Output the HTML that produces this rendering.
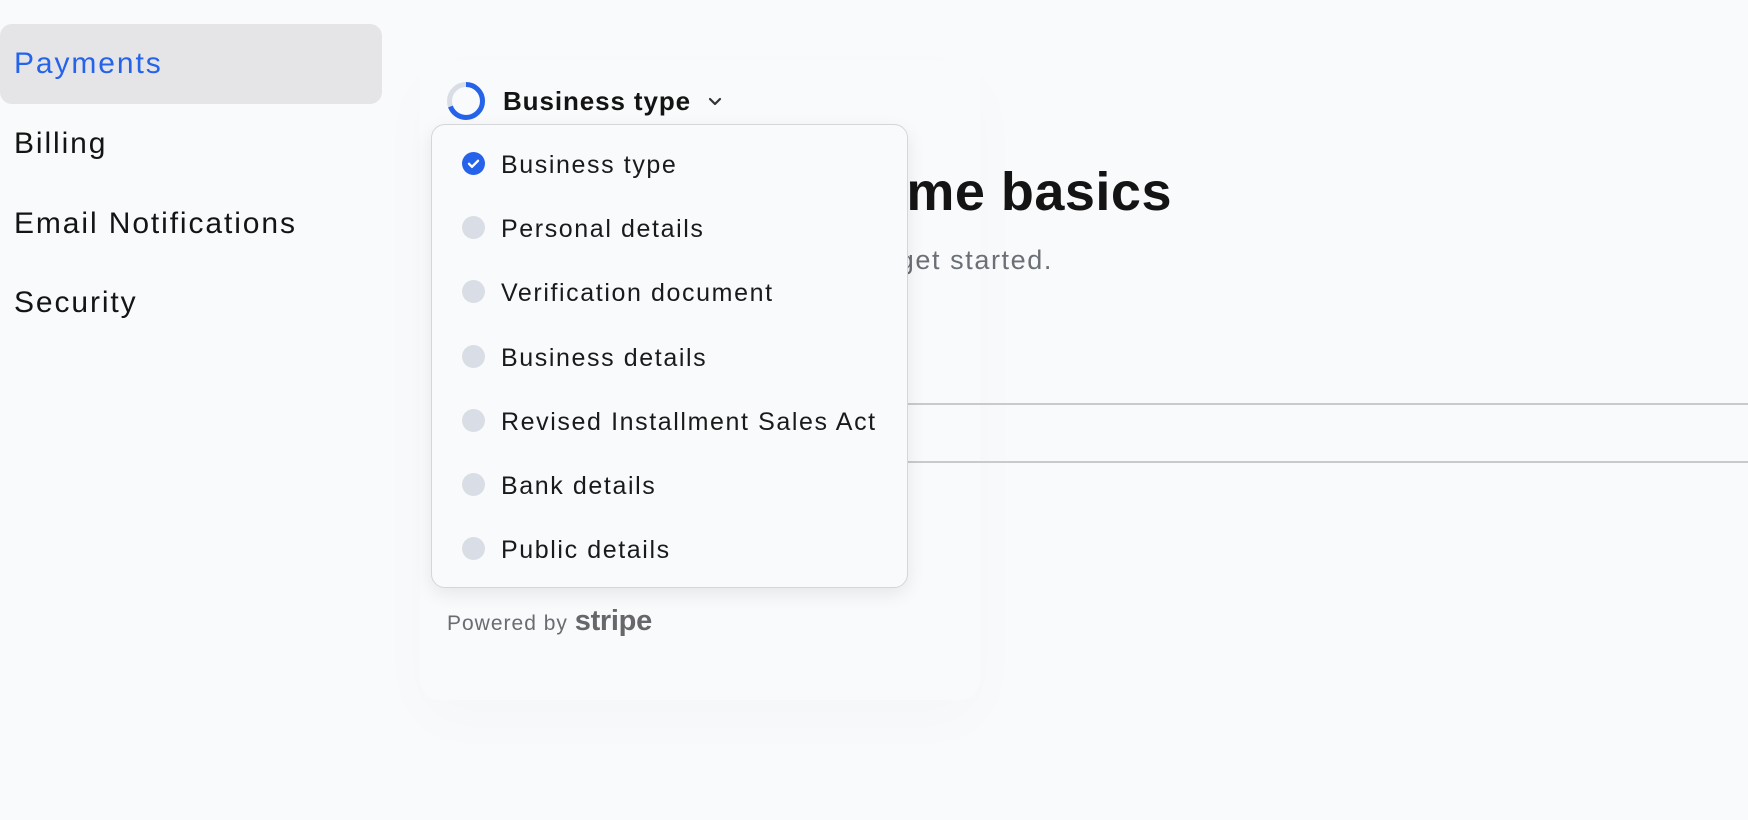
<!DOCTYPE html>
<html><head><meta charset="utf-8"><style>
*{margin:0;padding:0;box-sizing:border-box}
body{width:1748px;height:820px;background:#f9fafb;font-family:"Liberation Sans",sans-serif;position:relative;overflow:hidden;color:#111}
.abs{position:absolute;white-space:nowrap}
.nav{left:14px;font-size:30px;line-height:36px;color:#141414;letter-spacing:1.9px}
.hl{left:0;top:24px;width:382px;height:80px;background:#e5e5e8;border-radius:12px}
.dd{left:431px;top:124px;width:477px;height:464px;background:#f9fafb;border:1.5px solid #d4d6da;border-radius:14px;box-shadow:0 6px 18px rgba(0,0,0,.08)}
.it{left:501px;font-size:25px;line-height:30px;color:#1a1a1a;letter-spacing:1.6px}
.dot{left:462px;width:23px;height:23px;border-radius:50%;background:#d9dee6}
</style></head><body>
<div class="abs" style="left:420px;top:60px;width:560px;height:640px;box-shadow:0 20px 60px rgba(0,0,0,.02);border-radius:20px"></div>
<div class="abs hl"></div>
<div class="abs nav" style="top:46px;color:#2563eb">Payments</div>
<div class="abs nav" style="top:126px">Billing</div>
<div class="abs nav" style="top:206px">Email Notifications</div>
<div class="abs nav" style="top:285px">Security</div>

<div class="abs" style="right:576px;top:160px;font-size:54px;font-weight:bold;line-height:64px;color:#141414;letter-spacing:0.5px">Let’s start with some basics</div>
<div class="abs" style="right:695px;top:244px;font-size:27px;line-height:32px;color:#6b6f76;letter-spacing:1.6px">Tell us a bit about yourself to get started.</div>
<div class="abs" style="left:900px;top:403px;width:848px;height:2px;background:#c9cacd"></div>
<div class="abs" style="left:900px;top:461px;width:848px;height:2px;background:#c9cacd"></div>

<svg class="abs" style="left:446px;top:81px" width="40" height="40" viewBox="0 0 40 40"><circle cx="20" cy="20" r="16.5" fill="none" stroke="#d9dee6" stroke-width="5"/><circle cx="20" cy="20" r="16.5" fill="none" stroke="#2563eb" stroke-width="5" stroke-dasharray="72 200" transform="rotate(-90 20 20)"/></svg>
<div class="abs" style="left:503px;top:86px;font-size:26px;font-weight:bold;line-height:30px;color:#141414;letter-spacing:0.9px">Business type</div>
<svg class="abs" style="left:707px;top:96px" width="16" height="12" viewBox="0 0 16 12"><path d="M3 3l5 5 5-5" fill="none" stroke="#333" stroke-width="2.2" stroke-linecap="round" stroke-linejoin="round"/></svg>

<div class="abs dd"></div>
<svg class="abs" style="left:462px;top:152px" width="23" height="23" viewBox="0 0 23 23"><circle cx="11.5" cy="11.5" r="11.5" fill="#2563eb"/><path d="M7 11.8l3 3 6-6" fill="none" stroke="#fff" stroke-width="2.4" stroke-linecap="round" stroke-linejoin="round"/></svg>
<div class="abs it" style="top:150px">Business type</div>
<div class="abs dot" style="top:216px"></div><div class="abs it" style="top:214px">Personal details</div>
<div class="abs dot" style="top:280px"></div><div class="abs it" style="top:278px">Verification document</div>
<div class="abs dot" style="top:345px"></div><div class="abs it" style="top:343px">Business details</div>
<div class="abs dot" style="top:409px"></div><div class="abs it" style="top:407px">Revised Installment Sales Act</div>
<div class="abs dot" style="top:473px"></div><div class="abs it" style="top:471px">Bank details</div>
<div class="abs dot" style="top:537px"></div><div class="abs it" style="top:535px">Public details</div>

<div class="abs" style="left:447px;top:608px;font-size:21px;line-height:26px;color:#6b6b70;letter-spacing:1px">Powered by <b style="font-size:29px;letter-spacing:-0.3px;color:#66666b">stripe</b></div>
</body></html>
